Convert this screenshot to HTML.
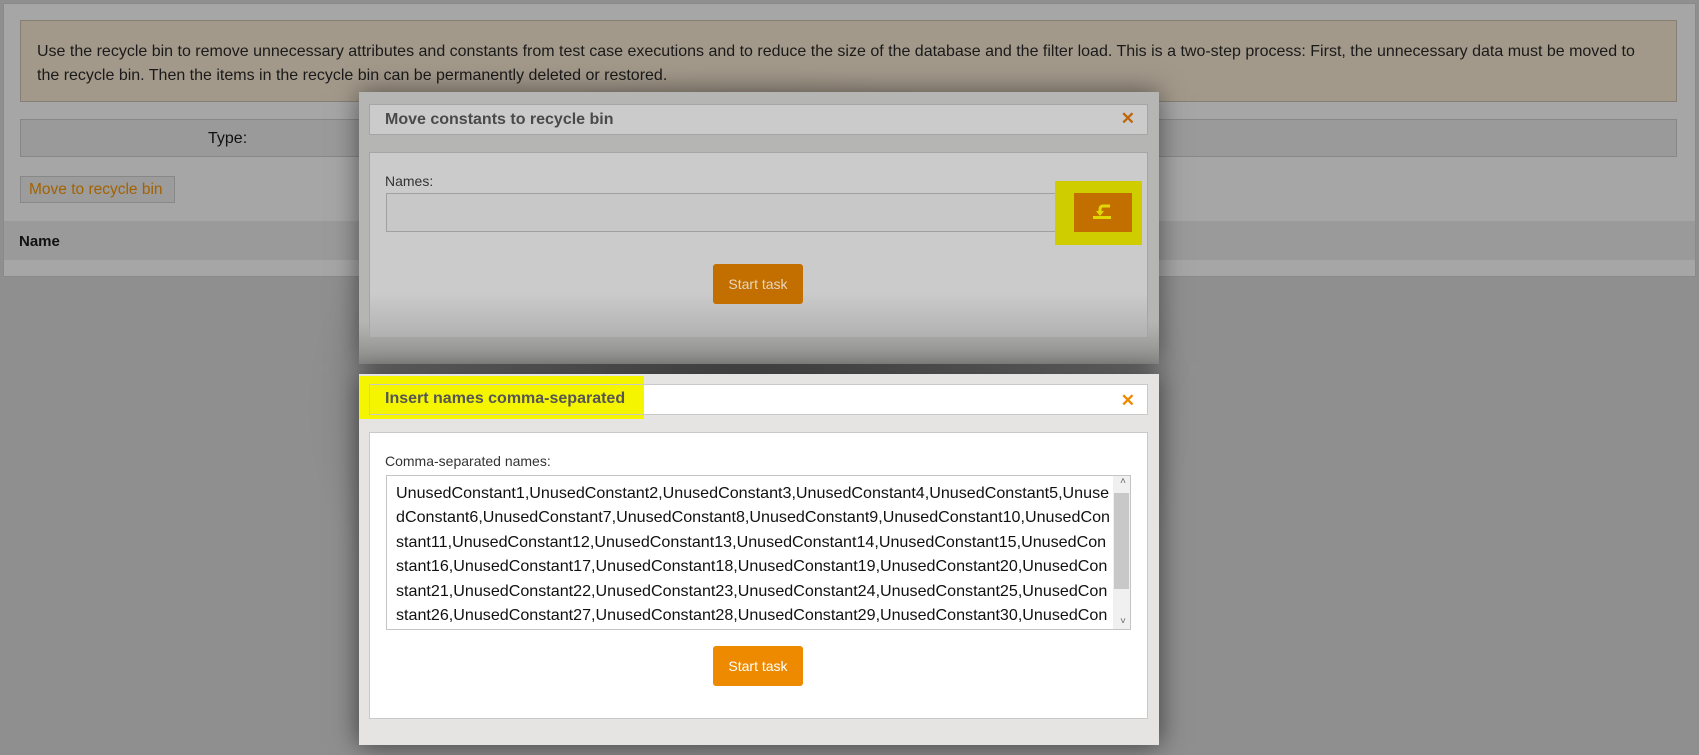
<!DOCTYPE html>
<html><head><meta charset="utf-8"><style>
*{box-sizing:border-box;margin:0;padding:0}
body{width:1699px;height:755px;overflow:hidden;background:#8f8f8f;font-family:"Liberation Sans",Arial,sans-serif;position:relative}
.abs{position:absolute}
</style></head><body>
<div class="abs" style="left:3px;top:3px;width:1693px;height:274px;background:#a6a6a6;border:1px solid #8a8a8a"></div>
<div class="abs" style="left:20px;top:20px;width:1657px;height:82px;background:#a3998b;border:1px solid #857f76;padding:19px 16px;font-size:16px;line-height:24px;color:#1a1a1a">Use the recycle bin to remove unnecessary attributes and constants from test case executions and to reduce the size of the database and the filter load. This is a two-step process: First, the unnecessary data must be moved to the recycle bin. Then the items in the recycle bin can be permanently deleted or restored.</div>
<div class="abs" style="left:20px;top:119px;width:1657px;height:38px;background:#9a9a9a;border:1px solid #878787;font-size:16px;color:#111"><span class="abs" style="left:187px;top:10px">Type:</span></div>
<div class="abs" style="left:20px;top:176px;width:155px;height:27px;background:#9c9c9c;border:1px solid #888;font-size:15.5px;color:#a36200;padding:4px 8px;white-space:nowrap">Move to recycle bin</div>
<div class="abs" style="left:4px;top:221px;width:1691px;height:39px;background:#9a9a9a;font-size:15px;font-weight:bold;color:#111;padding:12px 15px">Name</div>
<div class="abs" style="left:300px;top:60px;width:900px;height:695px;background:radial-gradient(ellipse at center,rgba(0,0,0,.35),rgba(0,0,0,0) 70%)"></div>

<!-- dialog 1 -->
<div class="abs" style="left:359px;top:92px;width:800px;height:272px;background:linear-gradient(#b5b5b3 0,#b5b5b3 230px,#8c8c8a 272px);box-shadow:0 0 25px rgba(0,0,0,.5)">
 <div class="abs" style="left:10px;top:12px;width:779px;height:31px;background:#cbcbcb;border:1px solid #a5a5a5;font-size:16px;font-weight:bold;color:#4a4a4a;padding:6px 15px">Move constants to recycle bin</div>
 <div class="abs" style="right:24px;top:17px;font-size:17px;font-weight:bold;color:#c0660a">✕</div>
 <div class="abs" style="left:10px;top:60px;width:779px;height:186px;background:linear-gradient(#cbcbcb 0,#cbcbcb 140px,#b0b0b0 186px);border:1px solid #a5a5a5">
  <div class="abs" style="left:15px;top:20px;font-size:14px;color:#333">Names:</div>
 </div>
 <div class="abs" style="left:27px;top:101px;width:688px;height:39px;background:#c8c8c8;border:1px solid #a0a0a0"></div>
 <div class="abs" style="left:696px;top:89px;width:87px;height:64px;background:#cfcd00"></div>
 <div class="abs" style="left:715px;top:101px;width:58px;height:39px;background:#c26f00">
  <svg class="abs" style="left:19px;top:11px" width="20" height="16" viewBox="0 0 20 16"><rect x="0" y="12" width="18" height="3" fill="#e0d800"/><path d="M17 2 H10 Q7 2 7 6 V10" stroke="#e0d800" stroke-width="3" fill="none"/><path d="M3 7 L7 12 L11 7Z" fill="#e0d800"/></svg>
 </div>
 <div class="abs" style="left:354px;top:172px;width:90px;height:40px;background:#c26f00;border-radius:3px;color:#e8d6bf;font-size:14px;text-align:center;line-height:40px">Start task</div>
</div>

<!-- dialog 2 -->
<div class="abs" style="left:359px;top:374px;width:800px;height:371px;background:#e6e4e3;box-shadow:0 0 25px rgba(0,0,0,.6)">
 <div class="abs" style="left:0;top:2px;width:285px;height:43px;background:#f5f500"></div>
 <div class="abs" style="left:10px;top:10px;width:779px;height:31px;border:1px solid #c9c9c9;background:linear-gradient(90deg,transparent 0,transparent 274px,#fff 274px)"></div>
 <div class="abs" style="left:26px;top:16px;font-size:16px;font-weight:bold;color:#555">Insert names comma-separated</div>
 <div class="abs" style="right:24px;top:17px;font-size:17px;font-weight:bold;color:#ee8a00">✕</div>
 <div class="abs" style="left:10px;top:58px;width:779px;height:287px;background:#fff;border:1px solid #c9c9c9">
  <div class="abs" style="left:15px;top:20px;font-size:14px;color:#333">Comma-separated names:</div>
 </div>
 <div class="abs" style="left:27px;top:101px;width:745px;height:155px;border:1px solid #c4c4c4;background:#fff;overflow:hidden">
  <div style="padding:5px 0 0 9px;width:727px;font-size:16.1px;line-height:24.4px;color:#111;word-break:break-all">UnusedConstant1,UnusedConstant2,UnusedConstant3,UnusedConstant4,UnusedConstant5,UnusedConstant6,UnusedConstant7,UnusedConstant8,UnusedConstant9,UnusedConstant10,UnusedConstant11,UnusedConstant12,UnusedConstant13,UnusedConstant14,UnusedConstant15,UnusedConstant16,UnusedConstant17,UnusedConstant18,UnusedConstant19,UnusedConstant20,UnusedConstant21,UnusedConstant22,UnusedConstant23,UnusedConstant24,UnusedConstant25,UnusedConstant26,UnusedConstant27,UnusedConstant28,UnusedConstant29,UnusedConstant30,UnusedConstant31</div>
  <div class="abs" style="right:0;top:0;width:17px;height:153px;background:#f0f0f0"></div>
  <div class="abs" style="right:1px;top:17px;width:15px;height:96px;background:#c8c8c8"></div>
  <div class="abs" style="right:4px;top:0;font-size:10px;color:#666">˄</div>
  <div class="abs" style="right:4px;bottom:2px;font-size:10px;color:#666">˅</div>
 </div>
 <div class="abs" style="left:354px;top:272px;width:90px;height:40px;background:#ee8a00;border-radius:3px;color:#fff;font-size:14px;text-align:center;line-height:40px">Start task</div>
</div>
</body></html>
